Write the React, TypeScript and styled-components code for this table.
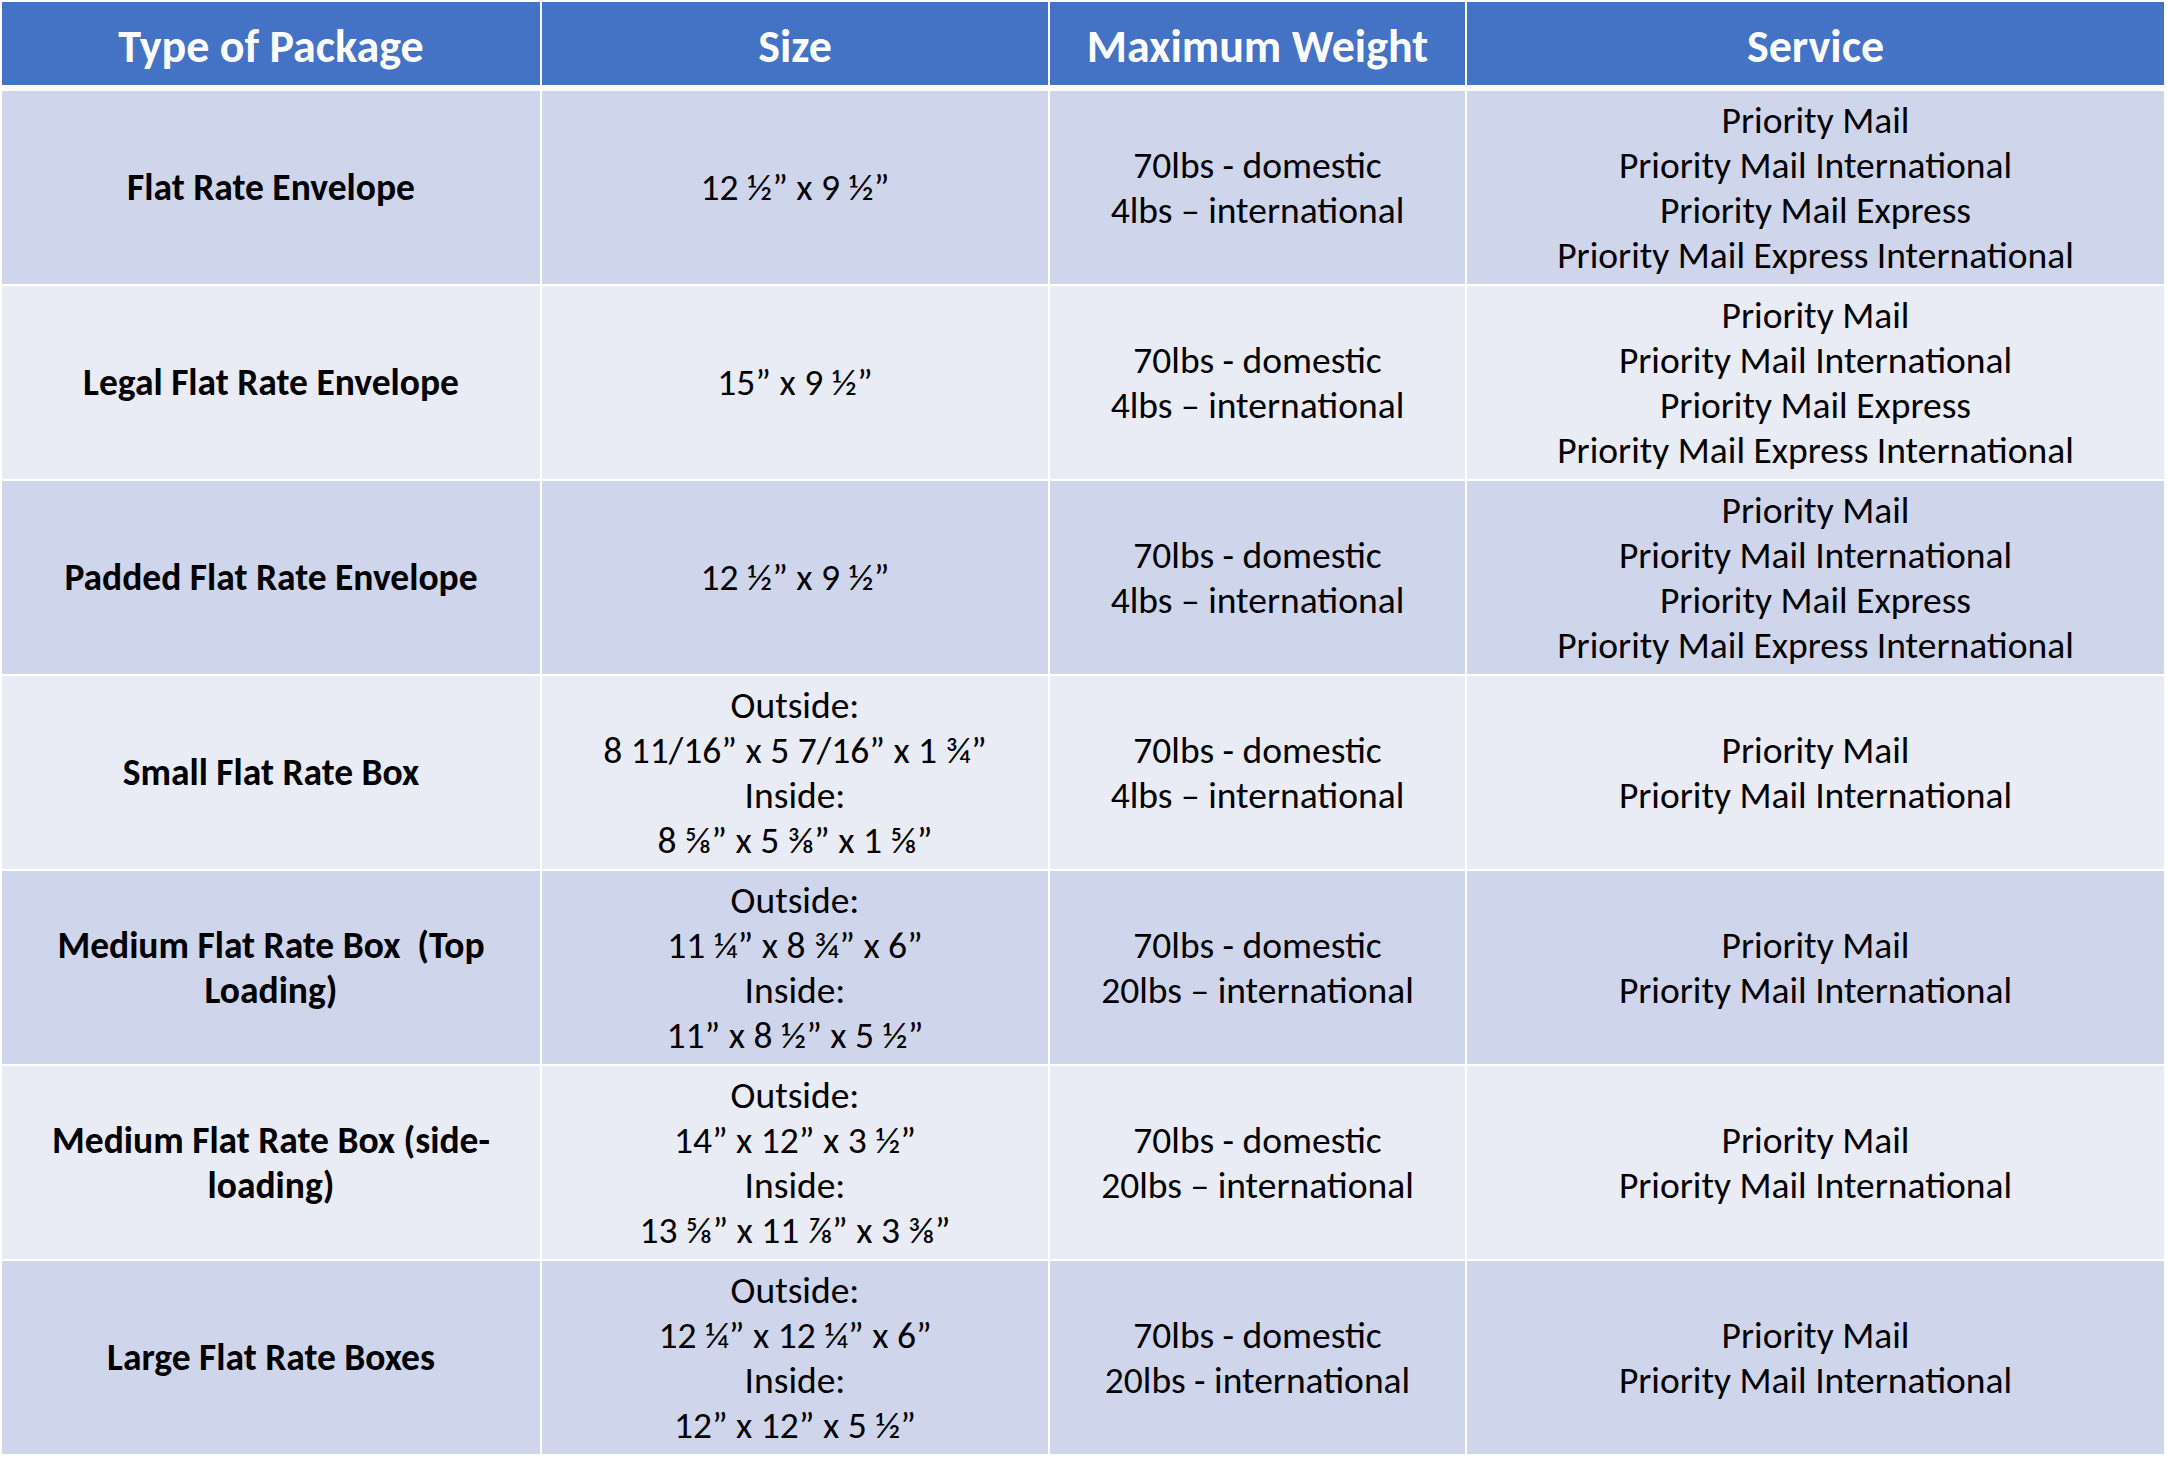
import React from "react";
import styled, { createGlobalStyle } from "styled-components";

const GlobalStyle = createGlobalStyle`
  html, body {
    margin: 0;
    padding: 0;
    background: #ffffff;
  }
  body {
    font-family: Carlito, Calibri, Lato, "Open Sans", sans-serif;
    color: #000000;
  }
`;

const COLUMNS = "538px 506px 415px 697px";

const Page = styled.div`
  padding: 2px;
  background: #ffffff;
`;

const Table = styled.div`
  display: flex;
  flex-direction: column;
  gap: 6px;
  width: 2162px;
`;

const HeaderRow = styled.div`
  display: grid;
  grid-template-columns: ${COLUMNS};
  column-gap: 2px;
  height: 83px;
`;

const HeaderCell = styled.div`
  display: flex;
  align-items: center;
  justify-content: center;
  background: #4472c4;
  color: #ffffff;
  font-weight: 700;
  font-size: 46px;
  padding-top: 4px;
`;

const Body = styled.div`
  display: flex;
  flex-direction: column;
  gap: 2px;
`;

const Row = styled.div<{ $shade: boolean }>`
  display: grid;
  grid-template-columns: ${COLUMNS};
  column-gap: 2px;
  height: 193px;

  & > div {
    background: ${(p) => (p.$shade ? "#cfd5ea" : "#e9ebf5")};
  }
`;

const Cell = styled.div<{ $bold?: boolean }>`
  display: flex;
  align-items: center;
  justify-content: center;
  text-align: center;
  font-size: 37.5px;
  line-height: 45px;
  font-weight: ${(p) => (p.$bold ? 700 : 400)};
`;

type Pkg = {
  name: string[];
  size: string[];
  weight: string[];
  service: string[];
};

const ALL_SERVICES = [
  "Priority Mail",
  "Priority Mail International",
  "Priority Mail Express",
  "Priority Mail Express International",
];
const PM = ["Priority Mail", "Priority Mail International"];

const rows: Pkg[] = [
  {
    name: ["Flat Rate Envelope"],
    size: ["12 ½” x 9 ½”"],
    weight: ["70lbs - domestic", "4lbs – international"],
    service: ALL_SERVICES,
  },
  {
    name: ["Legal Flat Rate Envelope"],
    size: ["15” x 9 ½”"],
    weight: ["70lbs - domestic", "4lbs – international"],
    service: ALL_SERVICES,
  },
  {
    name: ["Padded Flat Rate Envelope"],
    size: ["12 ½” x 9 ½”"],
    weight: ["70lbs - domestic", "4lbs – international"],
    service: ALL_SERVICES,
  },
  {
    name: ["Small Flat Rate Box"],
    size: ["Outside:", "8 11/16” x 5 7/16” x 1 ¾”", "Inside:", "8 ⅝” x 5 ⅜” x 1 ⅝”"],
    weight: ["70lbs - domestic", "4lbs – international"],
    service: PM,
  },
  {
    name: ["Medium Flat Rate Box\u00a0 (Top", "Loading)"],
    size: ["Outside:", "11 ¼” x 8 ¾” x 6”", "Inside:", "11” x 8 ½” x 5 ½”"],
    weight: ["70lbs - domestic", "20lbs – international"],
    service: PM,
  },
  {
    name: ["Medium Flat Rate Box (side-", "loading)"],
    size: ["Outside:", "14” x 12” x 3 ½”", "Inside:", "13 ⅝” x 11 ⅞” x 3 ⅜”"],
    weight: ["70lbs - domestic", "20lbs – international"],
    service: PM,
  },
  {
    name: ["Large Flat Rate Boxes"],
    size: ["Outside:", "12 ¼” x 12 ¼” x 6”", "Inside:", "12” x 12” x 5 ½”"],
    weight: ["70lbs - domestic", "20lbs - international"],
    service: PM,
  },
];

function Lines({ lines }: { lines: string[] }) {
  return (
    <span>
      {lines.map((l, i) => (
        <React.Fragment key={i}>
          {i > 0 && <br />}
          {l}
        </React.Fragment>
      ))}
    </span>
  );
}

export default function App() {
  return (
    <>
      <GlobalStyle />
      <Page>
        <Table>
          <HeaderRow>
            <HeaderCell>Type of Package</HeaderCell>
            <HeaderCell>Size</HeaderCell>
            <HeaderCell>Maximum Weight</HeaderCell>
            <HeaderCell>Service</HeaderCell>
          </HeaderRow>
          <Body>
            {rows.map((r, i) => (
              <Row key={i} $shade={i % 2 === 0}>
                <Cell $bold>
                  <Lines lines={r.name} />
                </Cell>
                <Cell>
                  <Lines lines={r.size} />
                </Cell>
                <Cell>
                  <Lines lines={r.weight} />
                </Cell>
                <Cell>
                  <Lines lines={r.service} />
                </Cell>
              </Row>
            ))}
          </Body>
        </Table>
      </Page>
    </>
  );
}
